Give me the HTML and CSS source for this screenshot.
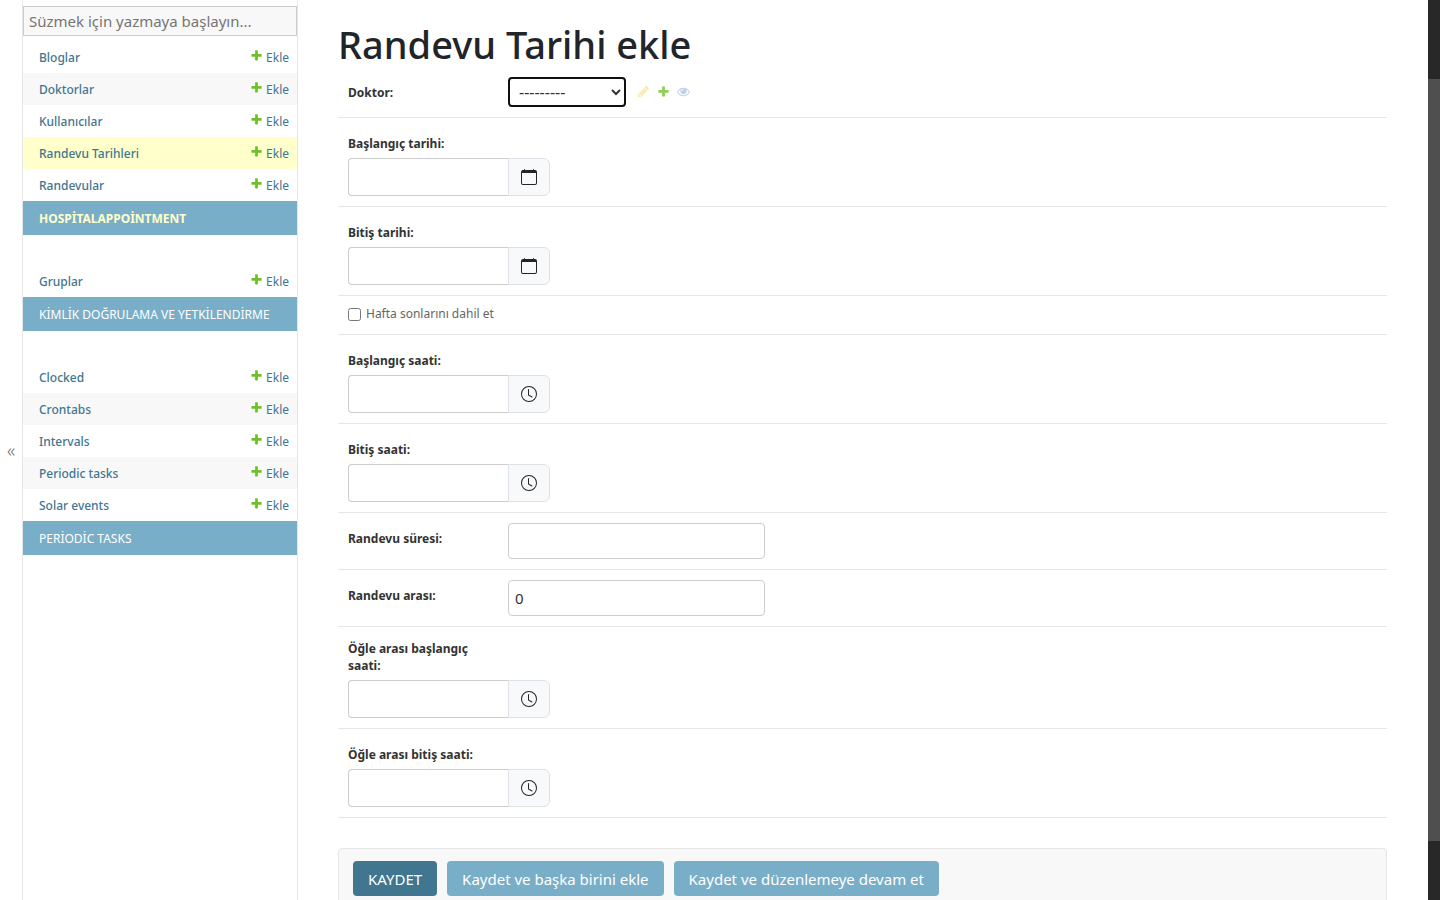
FILE: index.html
```
<!DOCTYPE html>
<html lang="tr">
<head>
<meta charset="utf-8">
<title>Randevu Tarihi ekle</title>
<link rel="stylesheet" href="styles.css">
</head>
<body>
<svg class="defs" aria-hidden="true">
  <symbol id="plus" viewBox="0 0 1792 1792"><path d="M1600 796v192q0 40-28 68t-68 28h-416v416q0 40-28 68t-68 28h-192q-40 0-68-28t-28-68v-416h-416q-40 0-68-28t-28-68v-192q0-40 28-68t68-28h416v-416q0-40 28-68t68-28h192q40 0 68 28t28 68v416h416q40 0 68 28t28 68z"/></symbol>
  <symbol id="pencil" viewBox="0 0 1792 1792"><path d="M491 1536l91-91-235-235-91 91v107h128v128h107zm523-928q0-22-22-22-10 0-17 7l-542 542q-7 7-7 17 0 22 22 22 10 0 17-7l542-542q7-7 7-17zm-54-192l416 416-832 832h-416v-416zm683 96q0 53-37 90l-166 166-416-416 166-165q36-38 90-38 53 0 91 38l235 234q37 39 37 91z"/></symbol>
  <symbol id="eye" viewBox="0 0 1792 1792"><path d="M1664 960q-152-236-381-353 61 104 61 225 0 185-131.500 316.500t-316.500 131.500-316.500-131.500-131.500-316.500q0-121 61-225-229 117-381 353 133 205 333.500 326.500t434.500 121.500 434.500-121.500 333.500-326.500zm-720-384q0-20-14-34t-34-14q-125 0-214.500 89.500t-89.500 214.500q0 20 14 34t34 14 34-14 14-34q0-86 61-147t147-61q20 0 34-14t14-34zm848 384q0 34-20 69-140 230-376.500 368.500t-499.500 138.500-499.500-139-376.500-368q-20-35-20-69t20-69q140-229 376.500-368t499.500-139 499.500 139 376.500 368q20 35 20 69z"/></symbol>
  <symbol id="calendar" viewBox="0 0 16 16"><path d="M3.500 0a.5.5 0 0 1 .5.5V1h8V.5a.5.5 0 0 1 1 0V1h1a2 2 0 0 1 2 2v11a2 2 0 0 1-2 2H2a2 2 0 0 1-2-2V3a2 2 0 0 1 2-2h1V.5a.5.5 0 0 1 .5-.5M1 4v10a1 1 0 0 0 1 1h12a1 1 0 0 0 1-1V4z"/></symbol>
  <symbol id="clock" viewBox="0 0 16 16"><path d="M8 3.500a.5.5 0 0 0-1 0V9a.5.5 0 0 0 .252.434l3.500 2a.5.5 0 0 0 .496-.868L8 8.710z"/><path d="M8 16A8 8 0 1 0 8 0a8 8 0 0 0 0 16m7-8A7 7 0 1 1 1 8a7 7 0 0 1 14 0"/></symbol>
</svg>

<button class="toggle" type="button" aria-label="Menüyü daralt">«</button>

<nav class="sidebar">
  <input class="filter" type="search" placeholder="Süzmek için yazmaya başlayın..." aria-label="Süz">
  <table class="module">
    <caption class="current"><a href="#">HOSPİTALAPPOİNTMENT</a></caption>
    <tbody>
    <tr><th scope="row"><a href="#">Bloglar</a></th><td><a class="add" href="#"><svg><use href="#plus"/></svg>Ekle</a></td></tr>
    <tr><th scope="row"><a href="#">Doktorlar</a></th><td><a class="add" href="#"><svg><use href="#plus"/></svg>Ekle</a></td></tr>
    <tr><th scope="row"><a href="#">Kullanıcılar</a></th><td><a class="add" href="#"><svg><use href="#plus"/></svg>Ekle</a></td></tr>
    <tr class="selected"><th scope="row"><a href="#">Randevu Tarihleri</a></th><td><a class="add" href="#"><svg><use href="#plus"/></svg>Ekle</a></td></tr>
    <tr><th scope="row"><a href="#">Randevular</a></th><td><a class="add" href="#"><svg><use href="#plus"/></svg>Ekle</a></td></tr>
    </tbody>
  </table>
  <table class="module">
    <caption><a href="#">KİMLİK DOĞRULAMA VE YETKİLENDİRME</a></caption>
    <tbody>
    <tr><th scope="row"><a href="#">Gruplar</a></th><td><a class="add" href="#"><svg><use href="#plus"/></svg>Ekle</a></td></tr>
    </tbody>
  </table>
  <table class="module">
    <caption><a href="#">PERİODİC TASKS</a></caption>
    <tbody>
    <tr><th scope="row"><a href="#">Clocked</a></th><td><a class="add" href="#"><svg><use href="#plus"/></svg>Ekle</a></td></tr>
    <tr><th scope="row"><a href="#">Crontabs</a></th><td><a class="add" href="#"><svg><use href="#plus"/></svg>Ekle</a></td></tr>
    <tr><th scope="row"><a href="#">Intervals</a></th><td><a class="add" href="#"><svg><use href="#plus"/></svg>Ekle</a></td></tr>
    <tr><th scope="row"><a href="#">Periodic tasks</a></th><td><a class="add" href="#"><svg><use href="#plus"/></svg>Ekle</a></td></tr>
    <tr><th scope="row"><a href="#">Solar events</a></th><td><a class="add" href="#"><svg><use href="#plus"/></svg>Ekle</a></td></tr>
    </tbody>
  </table>
</nav>

<main class="content">
  <h1>Randevu Tarihi ekle</h1>
  <form>
    <div class="row inline">
      <label for="doctor">Doktor:</label>
      <select id="doctor"><option>---------</option></select>
      <div class="related">
        <a href="#" class="edit" aria-label="Düzenle"><svg><use href="#pencil"/></svg></a>
        <a href="#" class="new" aria-label="Ekle"><svg><use href="#plus"/></svg></a>
        <a href="#" class="view" aria-label="Görüntüle"><svg><use href="#eye"/></svg></a>
      </div>
    </div>
    <div class="row">
      <label for="start-date">Başlangıç tarihi:</label>
      <div class="picker"><input id="start-date" type="text"><button type="button" aria-label="Takvim"><svg><use href="#calendar"/></svg></button></div>
    </div>
    <div class="row">
      <label for="end-date">Bitiş tarihi:</label>
      <div class="picker"><input id="end-date" type="text"><button type="button" aria-label="Takvim"><svg><use href="#calendar"/></svg></button></div>
    </div>
    <div class="row check">
      <input id="weekends" type="checkbox"><label for="weekends">Hafta sonlarını dahil et</label>
    </div>
    <div class="row">
      <label for="start-time">Başlangıç saati:</label>
      <div class="picker"><input id="start-time" type="text"><button type="button" aria-label="Saat"><svg><use href="#clock"/></svg></button></div>
    </div>
    <div class="row">
      <label for="end-time">Bitiş saati:</label>
      <div class="picker"><input id="end-time" type="text"><button type="button" aria-label="Saat"><svg><use href="#clock"/></svg></button></div>
    </div>
    <div class="row inline">
      <label for="duration">Randevu süresi:</label>
      <input class="field" id="duration" type="text">
    </div>
    <div class="row inline">
      <label for="break">Randevu arası:</label>
      <input class="field" id="break" type="text" value="0">
    </div>
    <div class="row">
      <label for="lunch-start">Öğle arası başlangıç saati:</label>
      <div class="picker"><input id="lunch-start" type="text"><button type="button" aria-label="Saat"><svg><use href="#clock"/></svg></button></div>
    </div>
    <div class="row">
      <label for="lunch-end">Öğle arası bitiş saati:</label>
      <div class="picker"><input id="lunch-end" type="text"><button type="button" aria-label="Saat"><svg><use href="#clock"/></svg></button></div>
    </div>
    <div class="submit">
      <button class="primary" type="submit">KAYDET</button>
      <button type="submit">Kaydet ve başka birini ekle</button>
      <button type="submit">Kaydet ve düzenlemeye devam et</button>
    </div>
  </form>
</main>

<div class="scrollbar" aria-hidden="true"><div class="thumb"></div></div>
</body>
</html>
```

FILE: styles.css
```
* { box-sizing: border-box; }
body {
  margin: 0;
  height: 100vh;
  display: flex;
  overflow: hidden;
  background: #fff;
  color: #333;
  font-family: "Segoe UI", "Noto Sans", "Open Sans", sans-serif;
  font-size: 12px;
}
input, select, button { font-family: inherit; margin: 0; }
a { color: #417690; text-decoration: none; }
svg { display: block; fill: currentColor; }
.defs { display: none; }

.toggle {
  flex: none;
  width: 23px;
  padding: 0;
  border: 0;
  border-right: 1px solid #e6e6e6;
  background: #fff;
  color: #666;
  font-size: 18px;
  font-weight: 300;
}

.sidebar {
  flex: none;
  width: 275px;
  padding-top: 6px;
  border-right: 1px solid #e6e6e6;
}
.filter {
  display: block;
  width: 100%;
  height: 30px;
  margin-bottom: 5px;
  padding: 0 5px;
  border: 1px solid #ccc;
  border-radius: 0;
  background: #f8f8f8;
  font-size: 15px;
  appearance: none;
}
.filter::placeholder { color: #757575; }

.module {
  width: 100%;
  margin-bottom: 30px;
  border-collapse: collapse;
  caption-side: bottom;
}
.module caption {
  height: 34px;
  padding: 1px 16px 0;
  background: #79aec8;
  text-align: left;
  line-height: 33px;
  white-space: nowrap;
}
.module caption a { color: #fff; }
.module .current a { color: #ffc; font-weight: 700; }
.module th, .module td { height: 32px; padding: 0 8px 0 16px; }
.module th { text-align: left; font-weight: 500; }
.module tr:nth-child(even) { background: #f8f8f8; }
.module tr.selected { background: #ffc; }
.add { display: flex; justify-content: flex-end; align-items: center; gap: 3px; }
.add svg { width: 13px; height: 13px; margin-bottom: 4px; color: #70bf2b; }

.content { flex: 1; min-width: 0; padding: 21px 41px 0 40px; }
h1 {
  margin: 0;
  color: #212529;
  font-size: 38px;
  font-weight: 500;
  line-height: 46px;
}
.row { padding: 10px; border-bottom: 1px solid #e6e6e6; }
.row label {
  display: flex;
  align-items: flex-end;
  width: 160px;
  min-height: 30px;
  padding: 3px 10px 6px 0;
  font-weight: 700;
  line-height: 17px;
}
.inline { display: flex; align-items: flex-start; }
.inline label { flex: none; align-items: center; padding: 0; }
select {
  width: 118px;
  height: 30px;
  padding: 0 5px;
  border: 2px solid #101010;
  border-radius: 4px;
  background: #fff;
  color: #333;
  font-size: 16px;
}
.related { display: flex; gap: 7px; padding: 8px 0 0 11px; }
.related svg { width: 13px; height: 13px; }
.edit { color: #fbe9b0; }
.new { color: #8fcf57; }
.view { color: #bdd2ea; }

.field, .picker input {
  border: 1px solid #ccc;
  border-radius: 4px;
  background: #fff;
  color: #333;
  font-size: 15px;
  padding: 0 6px;
}
.field { width: 257px; height: 36px; }
.picker { display: flex; height: 38px; }
.picker input { width: 160px; border-right: 0; border-radius: 4px 0 0 4px; }
.picker button {
  display: grid;
  place-items: center;
  width: 42px;
  padding: 0;
  border: 1px solid #dee2e6;
  border-radius: 0 6px 6px 0;
  background: #f8f9fa;
  color: #212529;
}
.picker svg { width: 16px; height: 16px; }

.check { display: flex; align-items: flex-start; gap: 5px; }
.check input { width: 13px; height: 13px; margin-top: 2px; }
.check label {
  width: auto;
  min-height: 18px;
  padding: 0;
  align-items: flex-start;
  color: #666;
  font-weight: 400;
  line-height: 16px;
}

.submit {
  display: flex;
  gap: 10px;
  margin-top: 30px;
  padding: 12px 14px;
  border: 1px solid #e6e6e6;
  border-radius: 4px;
  background: #f8f8f8;
}
.submit button {
  height: 35px;
  padding: 0 15px;
  border: 0;
  border-radius: 4px;
  background: #79aec8;
  color: #fff;
  font-size: 15px;
}
.submit .primary { background: #417690; }

.scrollbar { flex: none; width: 12px; background: #282828; padding-top: 79px; }
.thumb { height: 762px; background: #4f4f4f; }
```
